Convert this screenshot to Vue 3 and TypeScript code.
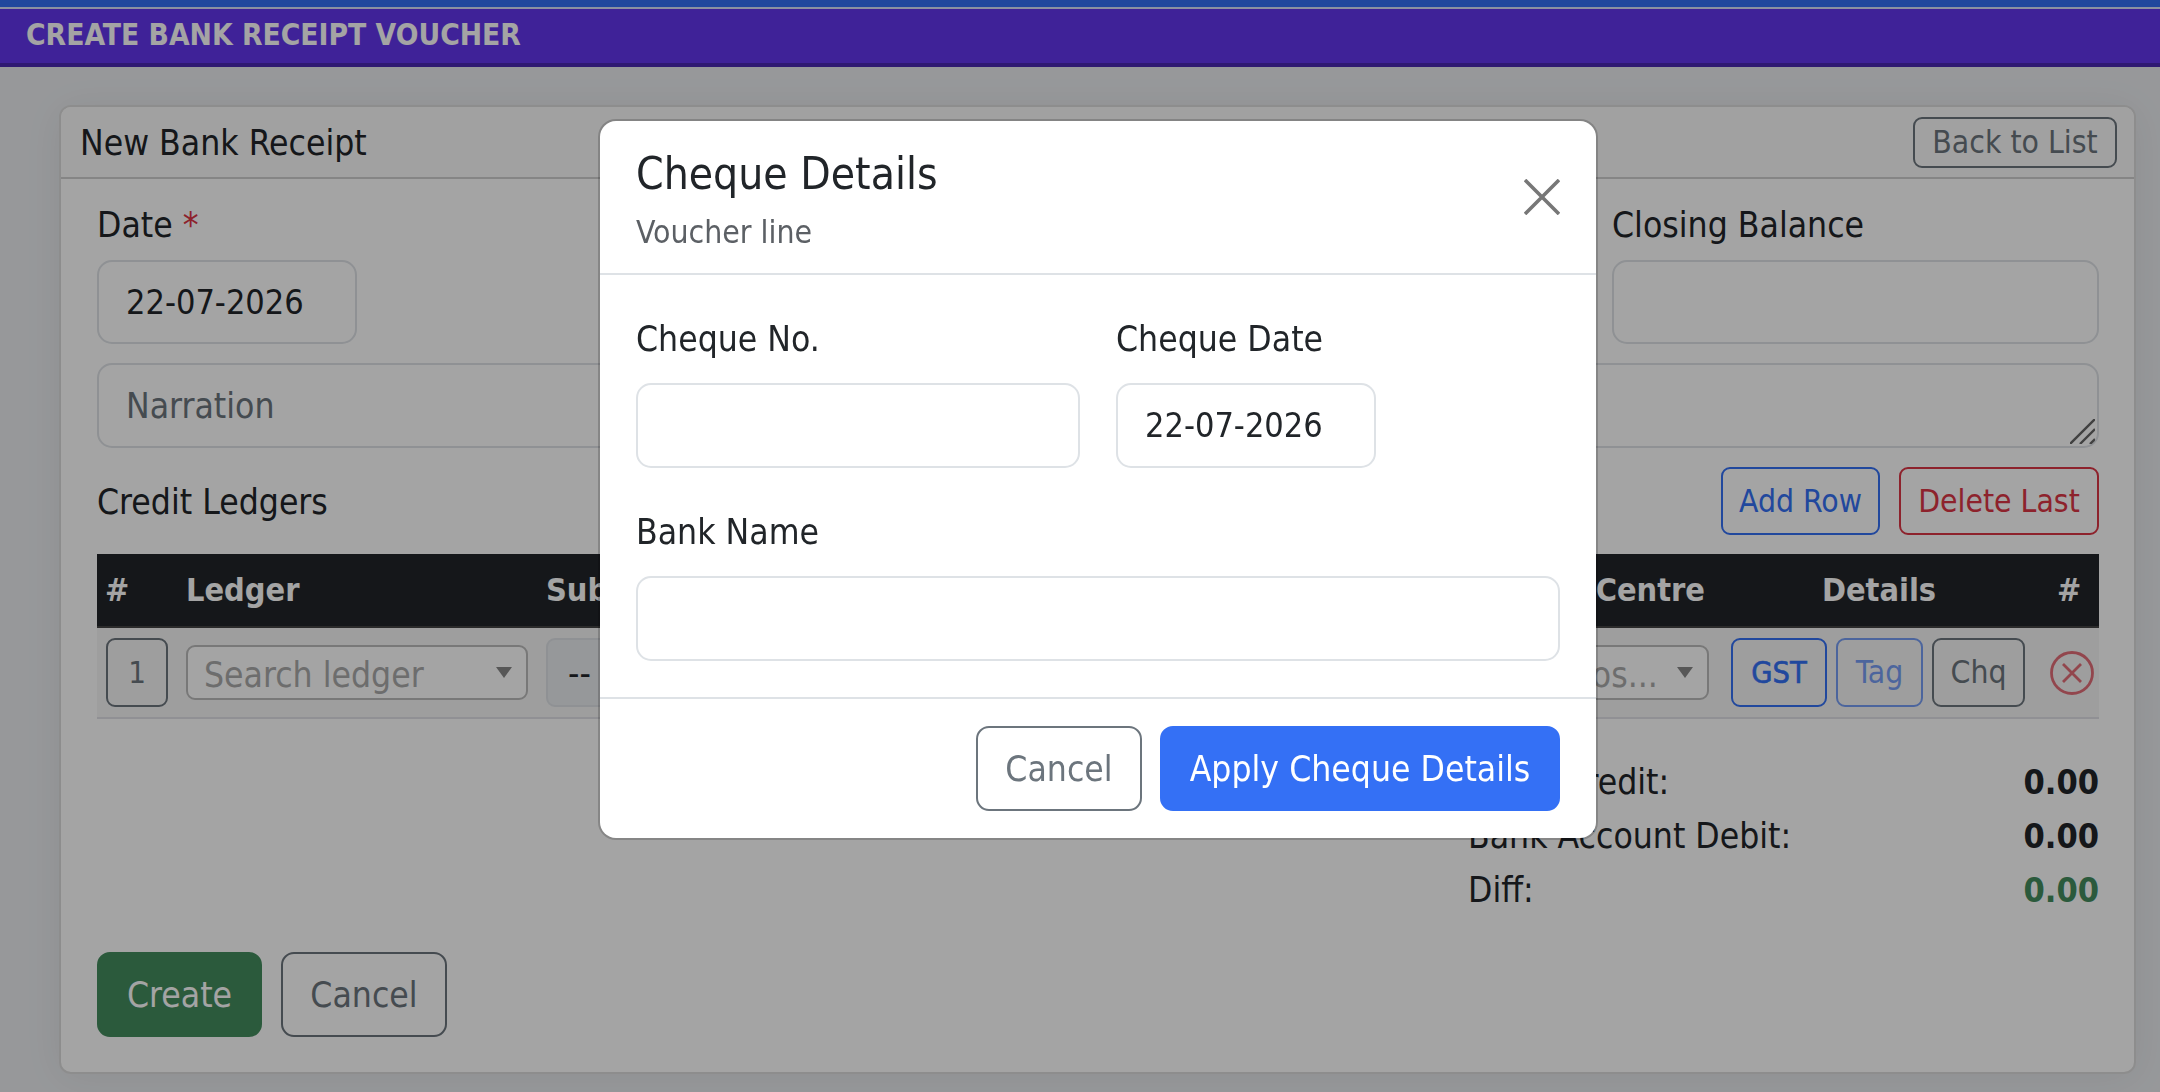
<script setup lang="ts">
const summary = [
  { label: 'Total Credit:', value: '0.00', tone: '' },
  { label: 'Bank Account Debit:', value: '0.00', tone: '' },
  { label: 'Diff:', value: '0.00', tone: 'ok' },
]
</script>

<template>
  <div class="page">
    <div class="strip"></div>
    <div class="titlebar">CREATE BANK RECEIPT VOUCHER</div>
    <section class="card">
      <header class="card-head">
        <span>New Bank Receipt</span>
        <button class="btn head-btn outline-grey">Back to List</button>
      </header>
      <div class="card-body">
        <div class="top-row">
          <div class="date-col">
            <label>Date <span class="req">*</span></label>
            <input class="field" value="22-07-2026" />
          </div>
          <div class="balance-col">
            <label>Closing Balance</label>
            <input class="field" />
          </div>
        </div>
        <div class="narration-wrap">
          <textarea class="narration" placeholder="Narration"></textarea>
          <svg class="grip" viewBox="0 0 25 25" fill="none" stroke="#666" stroke-width="2.4">
            <path d="M0 25 25 0M10 25 25 10M20 25 25 20" />
          </svg>
        </div>
        <div class="ledger-bar">
          <span>Credit Ledgers</span>
          <div class="ledger-actions">
            <button class="btn bar-btn outline-blue add">Add Row</button>
            <button class="btn bar-btn outline-red del">Delete Last</button>
          </div>
        </div>
        <div class="grid-table">
          <div class="tr thead">
            <div class="c-num">#</div>
            <div class="c-ledger">Ledger</div>
            <div class="c-sub">Sub Ledger</div>
            <div class="c-cost">Cost Centre</div>
            <div class="c-details center">Details</div>
            <div class="c-del">#</div>
          </div>
          <div class="tr tbody">
            <div class="c-num"><span class="num-box">1</span></div>
            <div class="c-ledger">
              <div class="combo ledger-combo"><span>Search ledger</span><i class="caret"></i></div>
            </div>
            <div class="c-sub"><input class="sub-input" value="--" disabled /></div>
            <div class="c-cost">
              <div class="combo cost-combo"><span>Select Cos...</span><i class="caret"></i></div>
            </div>
            <div class="c-details mini-row">
              <button class="btn mini outline-blue gst">GST</button>
              <button class="btn mini outline-blue tag">Tag</button>
              <button class="btn mini outline-grey chq">Chq</button>
            </div>
            <div class="c-del">
              <svg class="del-icon" viewBox="0 0 44 44" fill="none" stroke="currentColor" stroke-width="2.8">
                <circle cx="22" cy="22" r="20.5" />
                <path d="M13 13 31 31M31 13 13 31" />
              </svg>
            </div>
          </div>
        </div>
        <div class="summary">
          <div v-for="row in summary" :key="row.label" class="sum-row">
            <span>{{ row.label }}</span>
            <b :class="row.tone">{{ row.value }}</b>
          </div>
        </div>
        <div class="form-actions">
          <button class="btn act solid-green">Create</button>
          <button class="btn act outline-grey">Cancel</button>
        </div>
      </div>
    </section>

    <div class="backdrop"></div>
    <div class="modal">
      <div class="modal-head">
        <div>
          <h2>Cheque Details</h2>
          <p>Voucher line</p>
        </div>
        <svg class="close" viewBox="0 0 36 36" fill="none" stroke="currentColor" stroke-width="3.6">
          <path d="M1 1 35 35M35 1 1 35" />
        </svg>
      </div>
      <div class="modal-body">
        <div class="modal-row">
          <div class="cheque-no">
            <label>Cheque No.</label>
            <input class="field light" />
          </div>
          <div class="cheque-date">
            <label>Cheque Date</label>
            <input class="field light" value="22-07-2026" />
          </div>
        </div>
        <div class="bank-name">
          <label>Bank Name</label>
          <input class="field light" />
        </div>
      </div>
      <div class="modal-foot">
        <button class="btn act outline-grey">Cancel</button>
        <button class="btn apply">Apply Cheque Details</button>
      </div>
    </div>
  </div>
</template>

<style>
html, body { margin: 0; background: #ebedf0; }
</style>

<style scoped>
* { box-sizing: border-box; }
.page {
  position: relative;
  height: 1092px;
  overflow: hidden;
  background: #ebedf0;
  color: #212529;
  font-family: "DejaVu Sans", sans-serif;
  font-stretch: condensed;
  font-size: 35.2px;
  line-height: 53px;
}
.strip { height: 9px; background: #3470f5; border-bottom: 2px solid #d8e4fb; }
.titlebar {
  height: 58px;
  padding-left: 26px;
  background: #6236ec;
  border-bottom: 4px solid #4a28b2;
  color: #fff;
  font-weight: 700;
  font-size: 29.7px;
  line-height: 52px;
}
.card {
  margin: 38px 24px 0 59px;
  background: #fff;
  border: 2px solid #dcdcdc;
  border-radius: 12px;
  box-shadow: 0 4px 40px rgba(0, 0, 0, 0.06);
}
.card-head {
  height: 72px;
  padding: 0 17px 0 19px;
  display: flex;
  align-items: center;
  justify-content: space-between;
  background: #fbfbfb;
  border-bottom: 2px solid #cfcfcf;
  border-radius: 10px 10px 0 0;
}
.card-body { padding: 20px 35px 35px 36px; }
.top-row { display: flex; justify-content: space-between; }
label { display: block; height: 51px; line-height: 51px; margin-bottom: 10px; }
.req { color: #dc3545; }
.date-col { width: 260px; }
.balance-col { width: 487px; }
.field {
  display: block;
  width: 100%;
  height: 84px;
  padding: 0 27px;
  background: #fff;
  border: 2px solid #dee2e6;
  border-radius: 15px;
  color: #212529;
  font: inherit;
  font-size: 34px;
  outline: none;
}
.narration-wrap { position: relative; margin-top: 19px; }
.narration {
  display: block;
  width: 100%;
  height: 85px;
  padding: 14px 27px;
  border: 2px solid #dee2e6;
  border-radius: 15px;
  font: inherit;
  color: #212529;
  background: #fff;
  outline: none;
  resize: none;
}
.narration::placeholder { color: #6c757d; }
.grip { position: absolute; right: 4px; bottom: 4px; width: 25px; height: 25px; }
.ledger-bar {
  margin-top: 19px;
  display: flex;
  align-items: center;
  justify-content: space-between;
}
.ledger-actions { display: flex; gap: 19px; }
.btn {
  display: inline-flex;
  align-items: center;
  justify-content: center;
  padding: 0;
  background: transparent;
  border: 2px solid;
  border-radius: 13px;
  font: inherit;
  white-space: nowrap;
}
.head-btn { width: 204px; height: 51px; border-radius: 9px; font-size: 31.6px; }
.outline-grey { color: #6c757d; border-color: #6c757d; }
.outline-blue { color: #3470f5; border-color: #3470f5; }
.outline-red { color: #dc3545; border-color: #dc3545; }
.bar-btn { height: 68px; font-size: 31.6px; border-radius: 9px; }
.add { width: 159px; }
.del { width: 200px; }
.grid-table { margin-top: 19px; }
.tr { display: grid; grid-template-columns: 80px 360px 850px 335px 311px 65px; align-items: center; }
.thead {
  height: 74px;
  background: #212529;
  border-bottom: 2px solid #444;
  color: #fff;
  font-size: 32.2px;
  font-weight: 700;
}
.thead .c-cost { padding-right: 17px; }
.thead .c-details { padding-left: 3px; }
.thead .c-del { padding-left: 24px; }
.thead .c-num { padding-left: 8px; }
.tbody {
  height: 91px;
  background: #f6f6f6;
  border-bottom: 2px solid #e0e0e6;
  color: #999;
}
.c-num, .c-ledger, .c-sub, .c-details { padding-left: 9px; }
.c-cost { padding-right: 13px; text-align: right; }
.tbody .c-cost { display: flex; justify-content: flex-end; }
.tbody .c-del { padding-left: 17px; display: flex; }
.center { text-align: center; }
.num-box {
  display: flex;
  align-items: center;
  justify-content: center;
  width: 62px;
  height: 69px;
  border: 2px solid #6c757d;
  border-radius: 9px;
  color: #6c757d;
  font-size: 31px;
}
.combo {
  display: flex;
  align-items: center;
  justify-content: space-between;
  height: 55px;
  padding: 0 14px 0 16px;
  background: #fff;
  border: 2px solid #bbb;
  border-radius: 9px;
  color: #aaa;
  white-space: nowrap;
}
.combo span { padding-top: 4px; }
.ledger-combo { width: 342px; }
.cost-combo { width: 265px; }
.caret { width: 0; height: 0; border: 8px solid transparent; border-top: 11px solid #888; border-bottom: 0; }
.sub-input {
  width: 100%;
  height: 69px;
  padding: 0 20px;
  background: #e9ecef;
  border: 2px solid #dee2e6;
  border-radius: 9px;
  font: inherit;
  color: #212529;
}
.mini-row { display: flex; gap: 9px; }
.mini { height: 69px; font-size: 31.6px; border-radius: 9px; }
.gst { width: 96px; font-size: 30.5px; -webkit-text-stroke: 0.6px currentColor; }
.tag { width: 87px; opacity: 0.65; }
.chq { width: 93px; }
.del-icon { width: 44px; height: 44px; color: #dc3545; opacity: 0.7; }
.summary { margin: 37px 0 0 auto; width: 631px; }
.sum-row { display: flex; justify-content: space-between; height: 53.7px; align-items: center; }
.sum-row span { padding-bottom: 2px; }
.sum-row:first-child span { word-spacing: 12px; }
.sum-row b { font-weight: 700; font-size: 34px; }
.sum-row b.ok { color: #448c5e; }
.form-actions { display: flex; gap: 19px; margin-top: 35px; }
.act { width: 166px; height: 85px; }
.form-actions .solid-green { width: 165px; }
.solid-green { background: #448c5e; border-color: #448c5e; color: #fff; }
.backdrop { position: fixed; inset: 0; background: rgba(0, 0, 0, 0.357); }
.modal {
  position: absolute;
  left: 600px;
  top: 121px;
  width: 996px;
  background: #fff;
  border-radius: 16px;
  box-shadow: 0 0 0 2px rgba(0, 0, 0, 0.18);
  color: #212529;
}
.modal-head {
  height: 154px;
  padding: 26px 36px 0;
  display: flex;
  justify-content: space-between;
  border-bottom: 2px solid #dee2e6;
}
h2 { margin: 0; font-size: 44px; font-weight: 400; line-height: 53px; }
p { margin: 9px 0 0; font-size: 31.7px; line-height: 46px; color: #5c6065; }
.close { width: 36px; height: 36px; margin-top: 32px; color: #777; }
.modal-body { padding: 38px 36px 36px; }
.modal-body label { margin-bottom: 19px; }
.modal-row { display: flex; gap: 36px; margin-bottom: 38px; }
.cheque-no { width: 444px; }
.cheque-date { width: 260px; }
.light { height: 85px; padding-bottom: 2px; }
.modal-foot {
  padding: 27px 36px;
  display: flex;
  justify-content: flex-end;
  gap: 18px;
  border-top: 2px solid #dee2e6;
}
.apply { width: 400px; height: 85px; background: #3470f5; border-color: #3470f5; color: #fff; }
</style>
